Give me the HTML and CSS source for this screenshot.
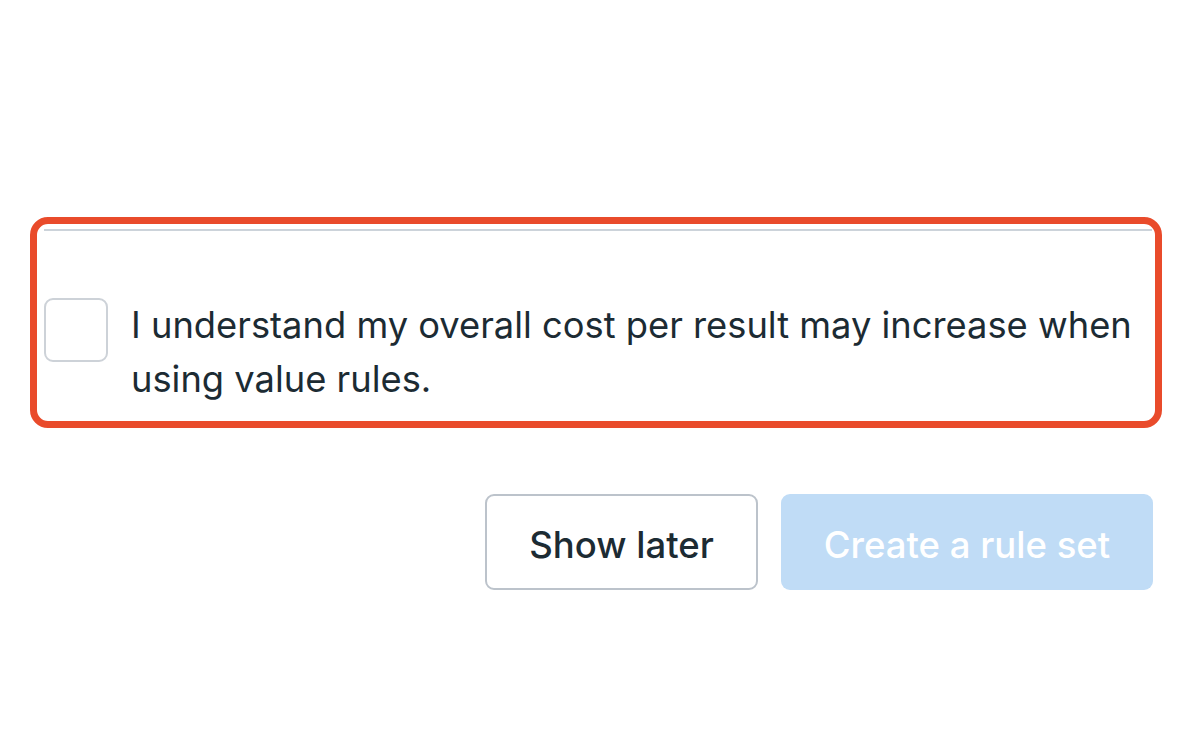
FILE: index.html
```html
<!DOCTYPE html>
<html lang="en">
<head>
<meta charset="utf-8">
<link rel="stylesheet" href="styles.css">
<title>Value rules</title>
</head>
<body>
<main class="page">
  <section class="highlight">
    <div class="consent">
      <span class="checkbox" role="checkbox" aria-checked="false"></span>
      <p class="consent-text">I understand my overall cost per result may increase when using value rules.</p>
    </div>
  </section>
  <div class="actions">
    <button class="btn btn-secondary" type="button">Show later</button>
    <button class="btn btn-primary" type="button" disabled>Create a rule set</button>
  </div>
</main>
</body>
</html>
```

FILE: styles.css
```css
html, body {
  margin: 0;
  padding: 0;
  background: #ffffff;
}
body {
  font-family: Inter, Roboto, "Liberation Sans", sans-serif;
  color: #1c2b33;
  width: 1200px;
  height: 750px;
  overflow: hidden;
}
.page {
  padding: 217px 38px 0 30px;
  display: flex;
  flex-direction: column;
}
.highlight {
  border: 7px solid #e94b2b;
  border-radius: 18px;
  padding: 5px 3px 0 7px;
  height: 192px;
}
.consent {
  border-top: 2px solid #ccd3da;
  display: flex;
  align-items: flex-start;
  gap: 23px;
  padding-top: 67px;
}
.checkbox {
  flex: none;
  width: 60px;
  height: 60px;
  border: 2px solid #cdd2d8;
  border-radius: 9px;
  background: #fff;
}
.consent-text {
  margin: 0;
  font-size: 36.3px;
  line-height: 54px;
  font-weight: 400;
  margin-top: 0;
}
.actions {
  display: flex;
  justify-content: flex-end;
  gap: 23px;
  margin-top: 66px;
  padding-right: 9px;
}
.btn {
  font-family: inherit;
  font-size: 36.5px;
  font-weight: 500;
  height: 96px;
  border-radius: 9px;
  padding: 5px 0 0;
  cursor: pointer;
}
.btn-secondary {
  width: 273px;
  background: #ffffff;
  border: 2px solid #bcc3cb;
  color: #1c2b33;
}
.btn-primary {
  width: 372px;
  background: #c0dcf6;
  border: none;
  color: #ffffff;
}
```
